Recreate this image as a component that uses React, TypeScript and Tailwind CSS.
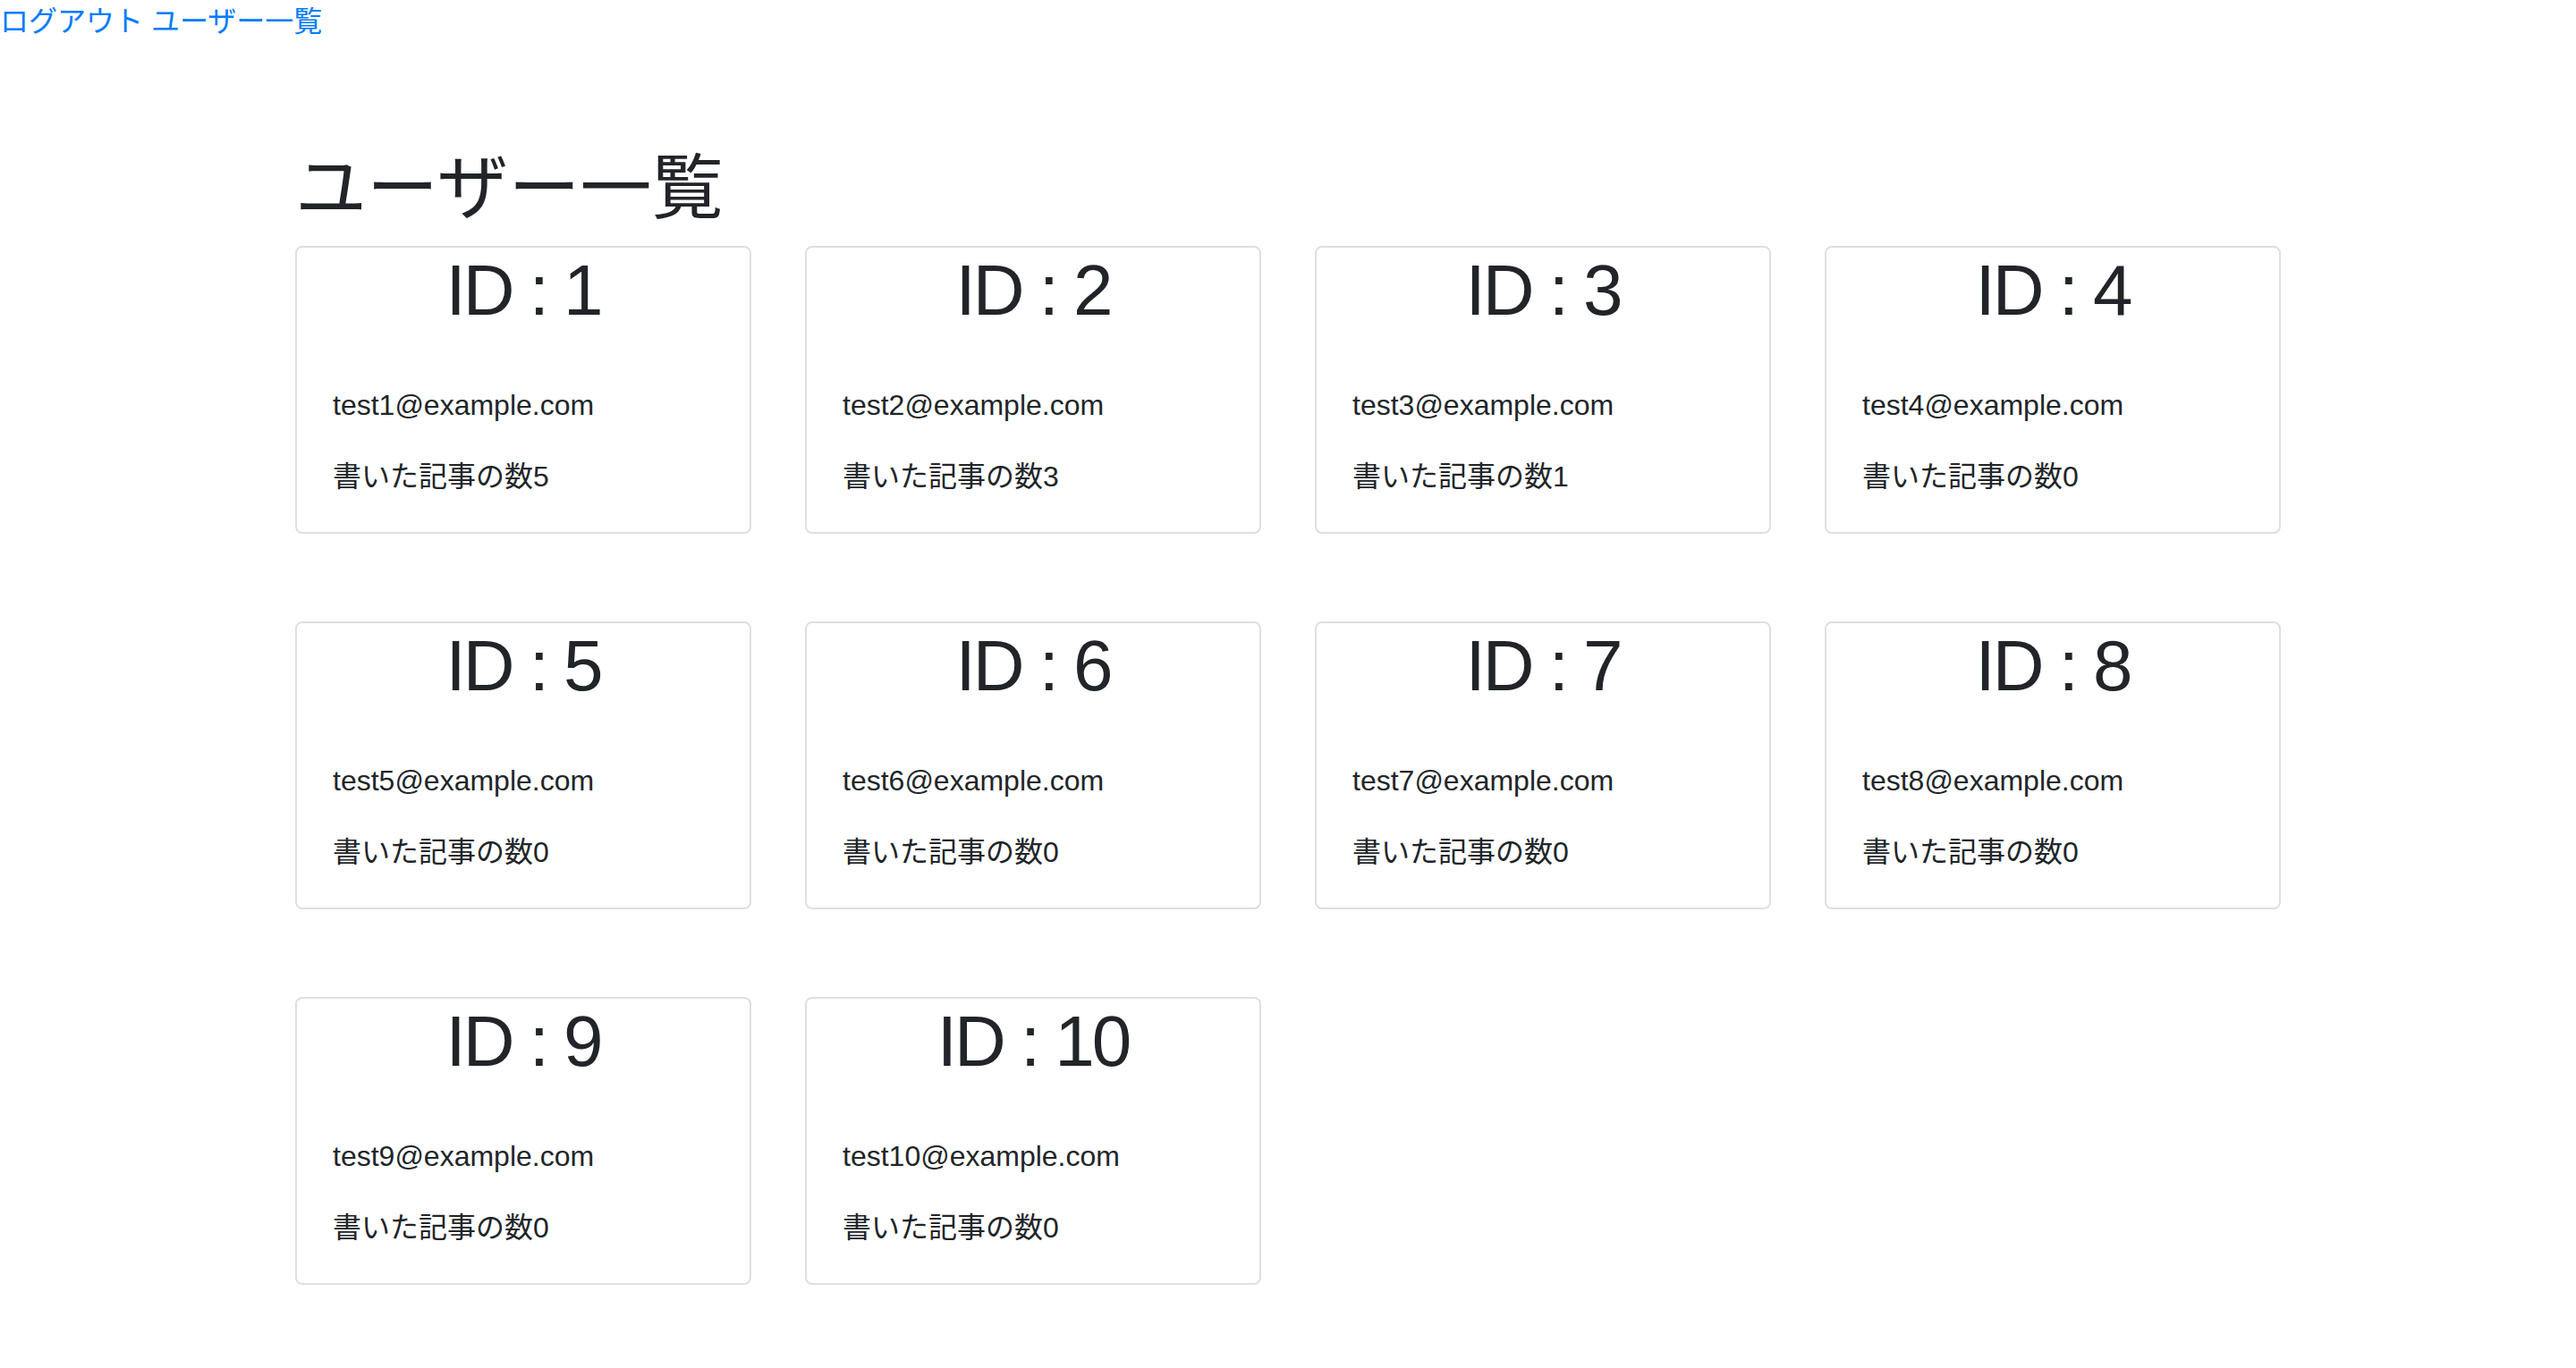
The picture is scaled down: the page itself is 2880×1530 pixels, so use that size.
import React from 'react';

interface User {
  id: number;
  email: string;
  postCount: number;
}

const users: User[] = [
  { id: 1, email: 'test1@example.com', postCount: 5 },
  { id: 2, email: 'test2@example.com', postCount: 3 },
  { id: 3, email: 'test3@example.com', postCount: 1 },
  { id: 4, email: 'test4@example.com', postCount: 0 },
  { id: 5, email: 'test5@example.com', postCount: 0 },
  { id: 6, email: 'test6@example.com', postCount: 0 },
  { id: 7, email: 'test7@example.com', postCount: 0 },
  { id: 8, email: 'test8@example.com', postCount: 0 },
  { id: 9, email: 'test9@example.com', postCount: 0 },
  { id: 10, email: 'test10@example.com', postCount: 0 },
];

const UserCard = ({ user }: { user: User }) => (
  <div className='w-[510px] border-2 border-[#dfdfdf] rounded-[8px] bg-white'>
    <h1 className='text-[80px] leading-[96px] text-center mb-[16px] font-normal tracking-[-3px]'>
      ID : {user.id}
    </h1>
    <div className='px-[40px] pt-[40px] pb-[38px] text-[32px] leading-[48px]'>
      <p className='mb-[32px]'>{user.email}</p>
      <p>書いた記事の数{user.postCount}</p>
    </div>
  </div>
);

const App = () => {
  return (
    <div
      className='min-h-screen bg-white text-[#212529]'
      style={{ fontFamily: '"Liberation Sans", "Noto Sans CJK JP", sans-serif' }}
    >
      {/* ヘッダーのリンク */}
      <nav className='text-[32px] leading-[48px] text-[#007bff]'>
        <a href='#' className='hover:underline'>ログアウト</a>{' '}
        <a href='#' className='hover:underline'>ユーザー一覧</a>
      </nav>

      <div className='ml-[330px] w-[2220px] mt-[115px]'>
        <h1 className='text-[80px] leading-[96px] mb-[16px] font-normal'>ユーザー一覧</h1>
        <div className='grid grid-cols-[repeat(4,510px)] gap-x-[60px] gap-y-[98px]'>
          {users.map((user) => (
            <UserCard key={user.id} user={user} />
          ))}
        </div>
      </div>
    </div>
  );
};

export default App;
